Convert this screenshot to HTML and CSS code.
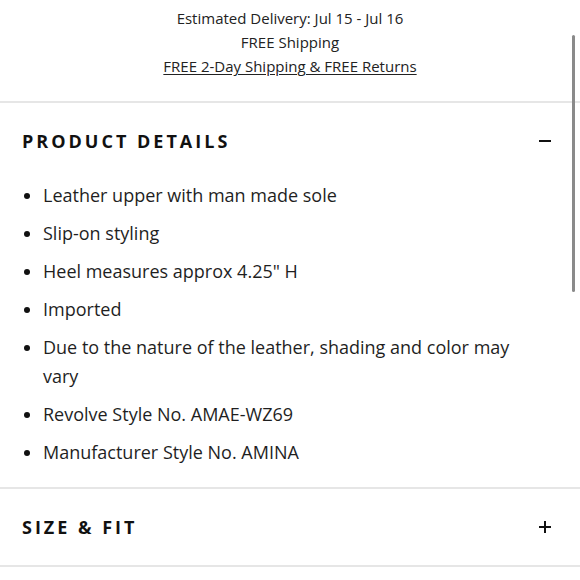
FILE: index.html
```html
<!DOCTYPE html>
<html lang="en">
<head>
<meta charset="utf-8">
<title>Product details</title>
<link rel="stylesheet" href="styles.css">
</head>
<body>
<div class="page">
  <div class="delivery">
    <div>Estimated Delivery: Jul 15 - Jul 16</div>
    <div>FREE Shipping</div>
    <div><a class="link" href="#">FREE 2-Day Shipping &amp; FREE Returns</a></div>
  </div>
  <section class="acc">
    <div class="acc-head">
      <h2 class="acc-title">PRODUCT DETAILS</h2>
      <span class="icon minus"></span>
    </div>
    <ul class="details">
      <li>Leather upper with man made sole</li>
      <li>Slip-on styling</li>
      <li>Heel measures approx 4.25" H</li>
      <li>Imported</li>
      <li>Due to the nature of the leather, shading and color may vary</li>
      <li>Revolve Style No. AMAE-WZ69</li>
      <li>Manufacturer Style No. AMINA</li>
    </ul>
  </section>
  <section class="acc">
    <div class="acc-head acc-head-closed">
      <h2 class="acc-title">SIZE &amp; FIT</h2>
      <span class="icon plus"></span>
    </div>
  </section>
  <div class="scrollbar"></div>
</div>
</body>
</html>
```
FILE: styles.css
```css
html, body {
  margin: 0;
  padding: 0;
  background: #fff;
}
.page {
  position: relative;
  width: 580px;
  height: 580px;
  overflow: hidden;
  font-family: "Open Sans", "Liberation Sans", sans-serif;
  color: #1f1f1f;
}
.delivery {
  text-align: center;
  font-size: 15px;
  line-height: 24px;
  padding: 6px 0 23px;
  color: #222;
}
.link {
  color: #222;
  text-decoration: underline;
  text-underline-offset: 2px;
}
.acc {
  border-top: 2px solid #e6e6e6;
}
.acc:last-of-type {
  border-bottom: 2px solid #e6e6e6;
}
.acc-head {
  display: flex;
  align-items: center;
  justify-content: space-between;
  box-sizing: border-box;
  height: 78px;
  padding: 0 29px 2px 22px;
}
.acc-head-closed {
  height: 76px;
  padding-bottom: 1px;
}
.acc-title {
  margin: 0;
  font-size: 18px;
  font-weight: 700;
  letter-spacing: 3px;
  color: #111;
}
.icon {
  position: relative;
  width: 12px;
  height: 12px;
}
.icon::before, .icon::after {
  content: "";
  position: absolute;
  background: #111;
}
.icon::before {
  left: 0;
  top: 5px;
  width: 12px;
  height: 2px;
}
.plus::after {
  left: 5px;
  top: 0;
  width: 2px;
  height: 12px;
}
.minus::after {
  display: none;
}
.details {
  list-style: none;
  margin: 0;
  padding: 0 40px 20px 43px;
  font-size: 18px;
  line-height: 29px;
}
.details li {
  position: relative;
  margin-bottom: 9px;
}
.details li:last-child {
  margin-bottom: 0;
}
.details li::before {
  content: "";
  position: absolute;
  left: -19px;
  top: 12px;
  width: 6px;
  height: 6px;
  border-radius: 50%;
  background: #111;
}
.scrollbar {
  position: absolute;
  left: 572px;
  top: 35px;
  width: 3px;
  height: 257px;
  border-radius: 2px;
  background: #8a8a8a;
}
```
